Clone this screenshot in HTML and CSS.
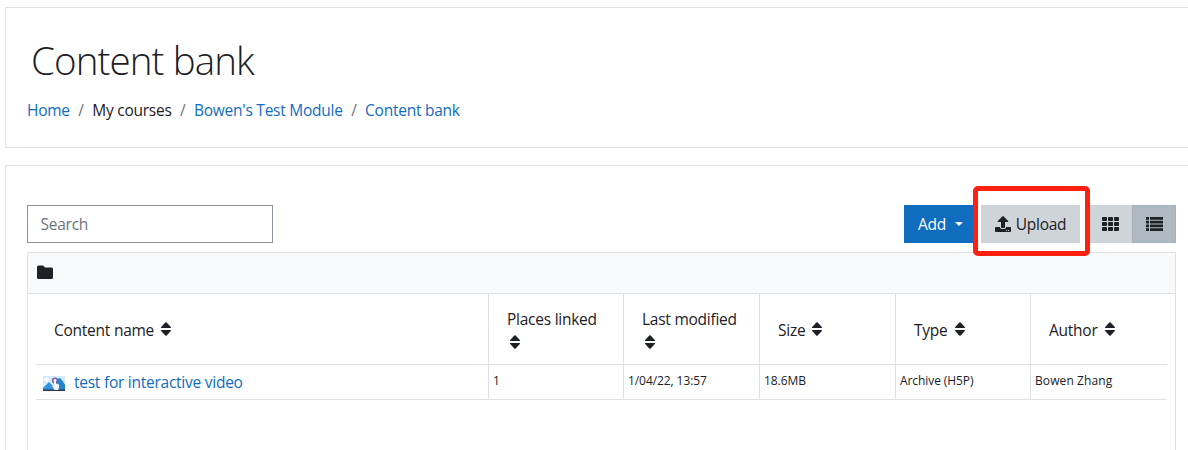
FILE: index.html
```html
<!DOCTYPE html>
<html lang="en">
<head>
<meta charset="utf-8">
<title>Content bank</title>
<link rel="stylesheet" href="styles.css">
</head>
<body>
<svg class="defs" width="0" height="0">
  <symbol id="sort" viewBox="0 0 10 14"><path d="M.5 6Q-.4 5.900.2 5L4.300.5Q5-.2 5.700.5L9.800 5Q10.400 5.900 9.500 6zM.5 8Q-.4 8.100.2 9L4.300 13.500Q5 14.200 5.700 13.500L9.800 9Q10.400 8.100 9.500 8z"/></symbol>
</svg>
<header class="card page-header">
  <h1>Content bank</h1>
  <nav class="crumbs">
    <a>Home</a><i>/</i><span>My courses</span><i>/</i><a>Bowen's Test Module</a><i>/</i><a>Content bank</a>
  </nav>
</header>
<main class="card content">
  <div class="toolbar">
    <input class="search" type="text" placeholder="Search" aria-label="Search">
    <div class="actions">
      <button class="btn add">Add<span class="caret"></span></button>
      <div class="upload-wrap">
        <button class="btn upload">
          <svg width="16" height="16" viewBox="0 0 512 512"><path d="M296 384h-80c-13 0-24-11-24-24V192h-88c-18 0-27-21-14-34L242 6c8-7 20-7 28 0l152 152c12 13 3 34-14 34h-88v168c0 13-11 24-24 24zm216-8v112c0 13-11 24-24 24H24c-13 0-24-11-24-24V376c0-13 11-24 24-24h136v8c0 31 25 56 56 56h80c31 0 56-25 56-56v-8h136c13 0 24 11 24 24zm-124 88a20 20 0 1 0-40 0 20 20 0 0 0 40 0zm64 0a20 20 0 1 0-40 0 20 20 0 0 0 40 0z"/></svg>
          <span>Upload</span>
        </button>
      </div>
      <button class="btn grid-view" aria-label="Grid view">
        <svg width="17" height="14" viewBox="0 0 17 14"><g id="c"><rect width="5" height="4" rx=".8"/><rect x="6" width="5" height="4" rx=".8"/><rect x="12" width="5" height="4" rx=".8"/></g><use href="#c" y="5"/><use href="#c" y="10"/></svg>
      </button>
      <button class="btn list-view" aria-label="List view">
        <svg width="17" height="14" viewBox="0 0 17 14"><path d="M0 0h3v2.800H0zM4 0h13v2.800H4zM0 3.700h3v2.800H0zM4 3.700h13v2.800H4zM0 7.400h3v2.800H0zM4 7.400h13v2.800H4zM0 11.200h3V14H0zM4 11.200h13V14H4z"/></svg>
      </button>
    </div>
  </div>
  <section class="bank-box">
    <div class="folder-bar">
      <svg width="16" height="14" viewBox="0 0 16 14"><path d="M1.500.5h4.700L8 2.500h6.500Q16 2.500 16 4v8.500q0 1.500-1.500 1.500h-13Q0 14 0 12.500V2Q0 .5 1.500.5z"/></svg>
    </div>
    <div class="table">
      <div class="row head">
        <div><span>Content name</span><svg class="sort"><use href="#sort"/></svg></div>
        <div class="stack"><span>Places linked</span><svg class="sort"><use href="#sort"/></svg></div>
        <div class="stack"><span>Last modified</span><svg class="sort"><use href="#sort"/></svg></div>
        <div><span>Size</span><svg class="sort"><use href="#sort"/></svg></div>
        <div><span>Type</span><svg class="sort"><use href="#sort"/></svg></div>
        <div><span>Author</span><svg class="sort"><use href="#sort"/></svg></div>
      </div>
      <div class="row item">
        <div class="name">
          <svg width="22" height="15" viewBox="0 0 22 15"><path fill="#d3ecfb" d="M0 0h22v15H0z"/><circle cx="3.500" cy="3.500" r="2.200" fill="#fff"/><path fill="#3295dc" d="M0 12 6 6l4 4 6-8 3 2 3 5v5H0z"/><path fill="#2384ca" d="m15 3 2-1 5 7v5h-5z"/><path fill="#303c4a" d="M0 13.500h22V15H0z"/><circle cx="12" cy="4.500" r="2.400" fill="none" stroke="#85509f" stroke-width="1.400"/><path fill="#f4f3f5" d="M11 4q1-1 2 0v3.500l3 1v3L15 14h-3.500L9 10l1-1 1 1z"/></svg>
          <a>test for interactive video</a>
        </div>
        <div>1</div>
        <div>1/04/22, 13:57</div>
        <div>18.6MB</div>
        <div>Archive (H5P)</div>
        <div class="author">Bowen Zhang</div>
      </div>
    </div>
  </section>
</main>
</body>
</html>
```
FILE: styles.css
```css
* { box-sizing: border-box; }
body {
  margin: 0;
  padding: 7px 0 0 5px;
  height: 450px;
  overflow: hidden;
  background: #fff;
  color: #1d2125;
  font: 15.5px/24px "Open Sans", "Noto Sans", sans-serif;
  letter-spacing: -.25px;
}
.defs { display: block; height: 0; }
svg { fill: #1d2125; flex: none; }
a { color: #0f6cbf; }
.card { border: 1px solid #dee2e6; border-right: 0; }
.page-header { height: 141px; padding: 28px 0 0 21px; }
h1 {
  margin: 0 0 14px 4px;
  font-size: 38.5px;
  font-weight: 300;
  line-height: 48px;
  letter-spacing: -.9px;
}
.crumbs { display: flex; white-space: nowrap; }
.crumbs i { font-style: normal; color: #6a737b; margin: 0 8.5px; }
.content { margin-top: 17px; height: 285px; padding: 39px 12px 0 21px; border-bottom: 0; }
.toolbar { display: flex; justify-content: space-between; height: 38px; }
.search {
  width: 246px;
  height: 38px;
  padding: 0 12.5px;
  border: 1px solid #8f959e;
  font: inherit;
  letter-spacing: inherit;
}
.search::placeholder { color: #6a737b; opacity: 1; }
.actions { display: flex; }
.btn {
  display: flex;
  align-items: center;
  justify-content: center;
  height: 38px;
  padding: 0;
  border: 0;
  background: #ced4da;
  color: #1d2125;
  font: inherit;
  letter-spacing: inherit;
}
.add { width: 69px; padding-left: 4px; background: #0f6cbf; color: #fff; }
.caret { margin-left: 9px; border: 4px solid transparent; border-top-color: #fff; border-bottom: 0; }
.upload-wrap {
  width: 117px;
  height: 70px;
  margin-top: -19px;
  padding: 14px 0 0 3px;
  border: 5px solid #ff2010;
  border-radius: 5px;
  background: #fff;
  z-index: 1;
}
.upload { width: 99px; gap: 5px; }
.grid-view { width: 42px; padding-right: 1px; }
.grid-view svg, .list-view svg { margin-top: -1px; }
.list-view { width: 44px; background: #afb9c1; border: 1px solid #a4afb8; }
.bank-box { margin-top: 9px; height: 198px; border: 1px solid #dee2e6; border-bottom: 0; }
.folder-bar {
  height: 41px;
  padding: 12px 0 0 9px;
  background: #f8f9fa;
  border-bottom: 1px solid #dee2e6;
}
.folder-bar svg { display: block; }
.table { margin: 0 8px; }
.row {
  display: grid;
  grid-template-columns: 453px 135px 136px 136px 135px 1fr;
  border-bottom: 1px solid #dee2e6;
}
.row > div { border-right: 1px solid #dee2e6; white-space: nowrap; }
.row > div:last-child { border-right: 0; }
.head { height: 71px; }
.head > div { display: flex; align-items: center; gap: 7px; padding: 1px 0 0 18px; }
.head > .stack { flex-direction: column; align-items: flex-start; justify-content: center; gap: 4px; padding-top: 0; }
.sort { width: 10px; height: 14px; margin-top: -1px; }
.stack .sort { margin: 0 0 3px 3px; }
.item { height: 35px; font-size: 12px; letter-spacing: -.08px; line-height: 32px; }
.item > div { padding-left: 4px; }
.item > .author { letter-spacing: .1px; }
.item > .name { display: flex; align-items: center; gap: 9px; padding: 0 0 0 7px; font-size: 15.5px; letter-spacing: -.25px; }
.name svg { margin-top: 2px; }
```
